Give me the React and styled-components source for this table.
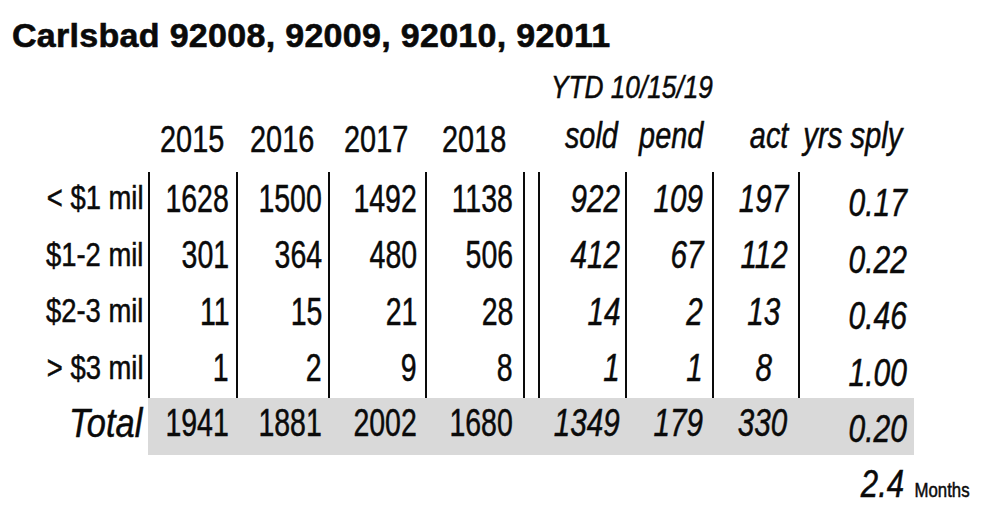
import React from 'react';
import styled, { createGlobalStyle } from 'styled-components';

const GlobalStyle = createGlobalStyle`
    *, *::before, *::after {
        box-sizing: border-box;
    }
    html, body {
        margin: 0;
        padding: 0;
        background: #fff;
    }
    body {
        color: #0a0a0a;
        font-family: "Liberation Sans", Arial, sans-serif;
        -webkit-text-stroke: 0.5px #0a0a0a;
    }
`;

// label | 2015 | 2016 | 2017 | 2018 | gap | sold | pend | act | yrs sply
const COLS = '148px 88px 92px 97px 98px 15px 87px 87px 86px 116px';
const YEAR_PAD = [7, 6, 8, 10];

const rows = [
    { label: '< $1 mil', years: [1628, 1500, 1492, 1138], ytd: [922, 109, 197], sply: '0.17' },
    { label: '$1-2 mil', years: [301, 364, 480, 506], ytd: [412, 67, 112], sply: '0.22' },
    { label: '$2-3 mil', years: [11, 15, 21, 28], ytd: [14, 2, 13], sply: '0.46' },
    { label: '> $3 mil', years: [1, 2, 9, 8], ytd: [1, 1, 8], sply: '1.00' },
];
const total = { years: [1941, 1881, 2002, 1680], ytd: [1349, 179, 330], sply: '0.20' };

const App = () => {
    return (
        <>
            <GlobalStyle />
            <Page>
                <Title>Carlsbad 92008, 92009, 92010, 92011</Title>

                <Grid $height="40px">
                    <Ytd><Squeeze $sx={0.82} $origin="left">YTD 10/15/19</Squeeze></Ytd>
                </Grid>

                <HeadRow>
                    <span />
                    {[2015, 2016, 2017, 2018].map((y) => (
                        <YearHead key={y}><Squeeze $origin="center">{y}</Squeeze></YearHead>
                    ))}
                    <span />
                    <ItalicHead $pad={7}><Squeeze>sold</Squeeze></ItalicHead>
                    <ItalicHead $pad={9}><Squeeze>pend</Squeeze></ItalicHead>
                    <ItalicHead $pad={10}><Squeeze>act</Squeeze></ItalicHead>
                    <ItalicHead $pad={12}><Squeeze $sx={0.79}>yrs sply</Squeeze></ItalicHead>
                </HeadRow>

                {rows.map((r) => (
                    <Grid $height="56.5px" key={r.label}>
                        <Label><Squeeze $sx={0.83}>{r.label}</Squeeze></Label>
                        {r.years.map((v, i) => (
                            <Num key={i} $lined $pad={YEAR_PAD[i]}><Squeeze $sx={0.73}>{v}</Squeeze></Num>
                        ))}
                        <Num $lined />
                        <Num $lined $italic $pad={5}><Squeeze $sx={0.76}>{r.ytd[0]}</Squeeze></Num>
                        <Num $lined $italic $pad={9}><Squeeze $sx={0.76}>{r.ytd[1]}</Squeeze></Num>
                        <Num $lined $italic $center><Squeeze $sx={0.76} $origin="center">{r.ytd[2]}</Squeeze></Num>
                        <Num $lined $italic $shift={3} $pad={7}><Squeeze $sx={0.77}>{r.sply}</Squeeze></Num>
                    </Grid>
                ))}

                <Grid $height="57px">
                    <TotalLabel><Squeeze $sx={0.84}>Total</Squeeze></TotalLabel>
                    {total.years.map((v, i) => (
                        <Num key={i} $shaded $shift={-4} $pad={YEAR_PAD[i]}><Squeeze $sx={0.73}>{v}</Squeeze></Num>
                    ))}
                    <Num $shaded />
                    <Num $shaded $shift={-4} $italic $pad={5}><Squeeze $sx={0.76}>{total.ytd[0]}</Squeeze></Num>
                    <Num $shaded $shift={-4} $italic $pad={9}><Squeeze $sx={0.76}>{total.ytd[1]}</Squeeze></Num>
                    <Num $shaded $shift={-4} $italic $center><Squeeze $sx={0.76} $origin="center">{total.ytd[2]}</Squeeze></Num>
                    <Num $shaded $shift={2} $italic $pad={7}><Squeeze $sx={0.77}>{total.sply}</Squeeze></Num>
                </Grid>

                <Supply>
                    <Big><Squeeze $sx={0.8}>2.4</Squeeze></Big>
                    <Small><Squeeze $sx={0.84}>Months</Squeeze></Small>
                </Supply>
            </Page>
        </>
    );
};

const Page = styled.div`
    width: 1000px;
    padding-top: 15px;
`;

const Squeeze = styled.span`
    display: inline-block;
    white-space: nowrap;
    transform: scaleX(${(p) => p.$sx || 0.78});
    transform-origin: ${(p) => p.$origin || 'right'} center;
`;

const Title = styled.h1`
    margin: 0 0 12px;
    padding-left: 12px;
    font-weight: 700;
    font-size: 34px;
    line-height: 40px;
    letter-spacing: 0.3px;
    height: 40px;
    white-space: nowrap;
    -webkit-text-stroke: 0.6px #0a0a0a;
`;

const Grid = styled.div`
    display: grid;
    grid-template-columns: ${COLS};
    height: ${(p) => p.$height};
`;

const Ytd = styled.div`
    grid-column: 7 / 10;
    padding-left: 13px;
    font-style: italic;
    font-size: 32px;
    line-height: 40px;
`;

const HeadRow = styled(Grid)`
    height: 65px;
    padding-top: 13px;
    align-items: start;
    font-size: 37px;
    line-height: 40px;
`;

const YearHead = styled.div`
    text-align: center;
`;

const ItalicHead = styled.div`
    display: flex;
    justify-content: flex-end;
    font-style: italic;
    padding-right: ${(p) => p.$pad || 0}px;
    margin-top: -4px;
`;

const Label = styled.div`
    display: flex;
    align-items: center;
    justify-content: flex-end;
    padding: 0 5px 4px 0;
    font-size: 33px;
`;

const TotalLabel = styled(Label)`
    font-style: italic;
    font-size: 41px;
    padding: 0 6px 6px 0;
`;

const Num = styled.div`
    display: flex;
    align-items: center;
    justify-content: ${(p) => (p.$center ? 'center' : 'flex-end')};
    padding-left: ${(p) => (p.$center ? '16px' : '0')};
    padding-right: ${(p) => p.$pad || 0}px;
    padding-top: ${(p) => (p.$shift > 0 ? p.$shift * 2 : 0)}px;
    padding-bottom: ${(p) => (p.$shift < 0 ? -p.$shift * 2 : p.$shift === undefined ? 3 : 0)}px;
    border-left: ${(p) => (p.$lined ? '2px solid #0a0a0a' : 'none')};
    background: ${(p) => (p.$shaded ? '#d9d9d9' : 'transparent')};
    font-size: 39px;
    font-style: ${(p) => (p.$italic ? 'italic' : 'normal')};
`;

const Supply = styled.div`
    display: flex;
    align-items: baseline;
    justify-content: flex-end;
    padding-right: 30px;
    margin-top: 7px;
`;

const Big = styled.span`
    font-style: italic;
    font-size: 39px;
    line-height: 44px;
`;

const Small = styled.span`
    font-size: 20px;
`;

export default App;
